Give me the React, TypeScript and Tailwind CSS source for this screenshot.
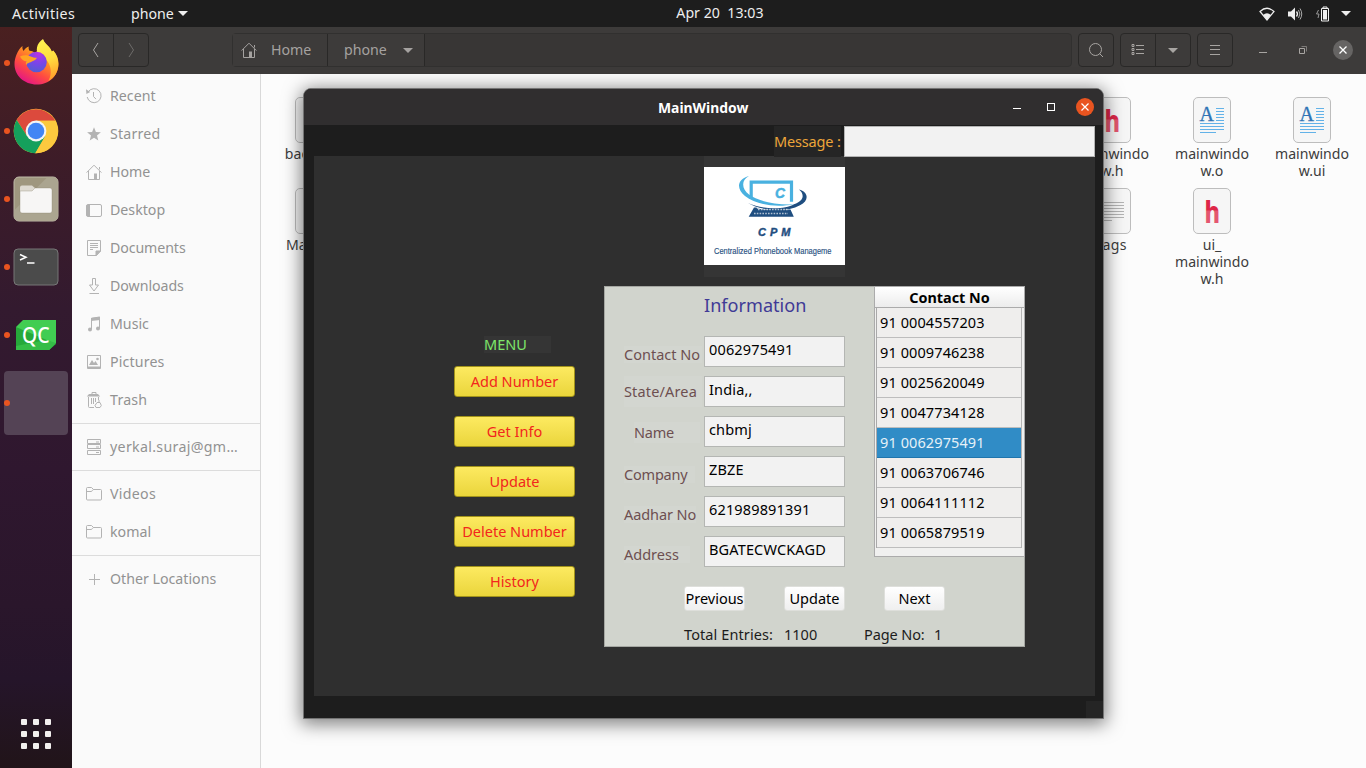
import React from "react";

type Kids = { children?: React.ReactNode };

/* ---------- small icons ---------- */

function Sym({ children, size = 16 }: Kids & { size?: number }) {
  return (
    <svg width={size} height={size} viewBox="0 0 16 16" fill="none" stroke="currentColor" strokeWidth="1" className="shrink-0">
      {children}
    </svg>
  );
}

const HomeShape = (
  <>
    <path d="M.6 8.6 8 1.2l7.4 7.4M2.5 7v8.5h11V7M13.5 3v2.5" />
    <path d="M8 9.5h3V15H8z" fill="currentColor" stroke="none" />
  </>
);
const FolderShape = (
  <path d="M.5 6V2.5a1 1 0 0 1 1-1h4l2 2h7a1 1 0 0 1 1 1v8.5a1 1 0 0 1-1 1h-13a1 1 0 0 1-1-1V6zM.5 5.5h4.6c1.2 0 1.4-2 2.6-2" />
);

const shapes: Record<string, React.ReactNode> = {
  recent: (
    <>
      <path d="M2 4.2A7 7 0 1 1 1.2 9M7.5 4v4.5l2.5 2.6" />
      <path d="M0 1.2 4.2 4 .4 6z" fill="currentColor" stroke="none" />
    </>
  ),
  star: <path d="m8 1.3 1.9 4.7 5 .3-3.9 3.2 1.3 4.9L8 11.7l-4.3 2.7L5 9.5 1.1 6.3l5-.3z" fill="currentColor" stroke="none" />,
  home: HomeShape,
  desktop: (
    <>
      <rect x=".5" y="2.5" width="15" height="12" rx="1.5" />
      <path d="M.5 3H4v11H.5z" fill="currentColor" stroke="none" />
    </>
  ),
  documents: (
    <>
      <path d="M1.5.5h13V11l-4 4.5h-9zM4 3.5h8M4 5.5h8M4 7.5h8M4 9.5h3" />
      <path d="M10 15.5V11h4.5z" fill="currentColor" />
    </>
  ),
  downloads: <path d="M6.5.5h3V7h3L8 13 3.500 7h3zM3.500 15.500h9.500" />,
  music: (
    <>
      <path d="M5.5 13V2.300l8-1.300v11.300" />
      <path d="M5 2 14 .7V4L5 5z" fill="currentColor" stroke="none" />
      <circle cx="4" cy="13.5" r="2" fill="currentColor" stroke="none" />
      <circle cx="12" cy="12.5" r="2" fill="currentColor" stroke="none" />
    </>
  ),
  pictures: (
    <>
      <path d="M1.5 1.5h13v13h-13z" />
      <path d="M2 12.5h12v2H2zM3 11l3-5 2 3 1.5-2 2.5 4z" fill="currentColor" stroke="none" />
      <circle cx="11.5" cy="5" r="1.3" fill="currentColor" stroke="none" />
    </>
  ),
  trash: (
    <>
      <path d="M2.5 5v9.5a1 1 0 0 0 1 1H8M12.5 5v3M5.5 6v6M7.5 6v6M9.5 6v4M6 2V.5h4V2" />
      <path d="M.8 4.5 3 2h9l2.2 2.5z" fill="currentColor" stroke="none" />
      <path d="M11 10.5h3l1.300 3-1.300 2h-4l-1-2zM13 8v2" />
    </>
  ),
  server: <path d="M1.5.5h13v4h-13zM1.5 5.5h13v4h-13zM1.5 11.5h13v4h-13zM10 3h3M10 8h3M10 13.5h3" />,
  folder: FolderShape,
  plus: <path d="M8.5 3v11M3 8.5h11" />,
};

/* ---------- dock ---------- */

function Firefox() {
  return (
    <svg width="46" height="48" viewBox="0 0 46 48" className="-mt-[2px] ml-px">
      <defs>
        <linearGradient id="ffa" x1=".85" y1=".1" x2=".3" y2="1">
          <stop offset="0" stopColor="#fff44f" />
          <stop offset=".35" stopColor="#ff9a1f" />
          <stop offset=".68" stopColor="#ff4a42" />
          <stop offset="1" stopColor="#e31587" />
        </linearGradient>
        <radialGradient id="ffb" cx=".6" cy=".1" r=".95">
          <stop offset="0" stopColor="#b833e1" />
          <stop offset=".5" stopColor="#7a45e8" />
          <stop offset="1" stopColor="#4f5fd0" />
        </radialGradient>
        <linearGradient id="ffc" x1=".4" y1="0" x2=".6" y2="1">
          <stop offset="0" stopColor="#fff34f" />
          <stop offset=".5" stopColor="#ffdc3f" />
          <stop offset="1" stopColor="#ff9a2a" />
        </linearGradient>
      </defs>
      <path d="M8.5 8c-.4 2.300.2 3.800 1.200 5 1-2 2.800-3.700 5-4.500-.3 2 .2 3.400.8 4.300 2.400.1 4.600 1.200 6 2.700L29 2c1.500 3.300 3.700 4.700 5.500 6.500 1.500 1.500 2.600 3.400 3 5l1.800-1c3.500 4 5.200 8.300 5.200 13.200C44.500 37.700 35 46.500 22.700 46.500S.5 37.700.5 26C.5 20 3.700 11.700 8.500 8z" fill="url(#ffa)" />
      <path d="M29 1c1.300 3.500 4 5.800 6 8 2 2.200 2.600 3.700 3 5.500l1.300-1.800c3 3.800 5 8 5 13.300 0 8-4 14-10 17 3-5 3.500-11.500.5-17.500-2.500-5-5.500-7.500-9.500-9.500-2.500-1-2.800-3-2.300-6.500C23.500 6 26 3 29 1z" fill="url(#ffc)" />
      <circle cx="22.500" cy="24" r="10.300" fill="url(#ffb)" />
      <path d="M6 18.500c3.500-1.800 8-1.800 11.500.3 1.800.9 3.500 1.200 5.300 1-.5 2.500-3.800 3-5.300 4-2.500 1.500-4.500 1-5.300 3.500-.5-1.500-.3-3 .3-4-2.500.1-5-1.700-6.500-4.800z" fill="#ffa423" />
    </svg>
  );
}

function Chrome() {
  return (
    <svg width="46" height="46" viewBox="0 0 46 46">
      <circle cx="23" cy="23" r="22.3" fill="#fcc934" />
      <path d="M3.700 12A22.300 22.300 0 0 1 42.300 12.700L23 12.700 14 28z" fill="#dc4a3d" />
      <path d="M3.700 12A22.300 22.300 0 0 0 22.300 45.300L32 28.500 14 28z" fill="#15a05c" />
      <path d="M42.300 12.700H23l9 16L22.300 45.300A22.300 22.300 0 0 0 42.300 12.700z" fill="#fcc93f" />
      <circle cx="23" cy="23" r="10.4" fill="#f4f4f4" />
      <circle cx="23" cy="23" r="8.3" fill="#4285f4" />
    </svg>
  );
}

function FilesApp() {
  return (
    <svg width="46" height="46" viewBox="0 0 46 46">
      <rect x="1" y="1" width="44" height="44" rx="5" fill="#9f977f" stroke="#c0bba9" />
      <path d="M1.500 34 34 1.500h6a4.500 4.500 0 0 1 4.500 4.500v34a4.500 4.500 0 0 1-4.500 4.500H6A4.500 4.500 0 0 1 1.500 40z" fill="#aba590" />
      <path d="M7 11.500a2 2 0 0 1 2-2h10l3.500 3V18H7z" fill="#dedad1" />
      <path d="M7 15h12l3-3h15a2 2 0 0 1 2 2v21a2 2 0 0 1-2 2H9a2 2 0 0 1-2-2z" fill="#f7f6f5" stroke="#8b846f" strokeOpacity=".35" />
    </svg>
  );
}

function Terminal() {
  return (
    <svg width="46" height="38" viewBox="0 0 46 38">
      <rect x="1" y="1" width="44" height="36" rx="4" fill="#4b4b4b" stroke="#777" />
      <path d="m7 6.500 6 2.800L7 12M14 15h7.500" fill="none" stroke="#fff" strokeWidth="1.500" />
    </svg>
  );
}

function QtCreator() {
  return (
    <svg width="40" height="30" viewBox="0 0 40 30">
      <path d="M7 0h33v23l-7 7H0V7z" fill="#41cd52" />
      <path d="M0 7 40 24l-7 6H0z" fill="#26a93a" />
      <path d="M0 26 30 20l10 3-7 7H0z" fill="#35bd47" />
      <text x="6" y="23" textLength="27.500" lengthAdjust="spacingAndGlyphs" fill="#fff" fontFamily="Noto Sans, sans-serif" fontWeight="500" fontSize="22">QC</text>
    </svg>
  );
}

function DockItem({ children, active }: Kids & { active?: boolean }) {
  return (
    <div className={active ? "relative flex h-16 w-16 items-center justify-center rounded bg-[#544355]" : "relative flex h-16 w-16 items-center justify-center"}>
      <span className="absolute left-0 top-[29px] h-[6px] w-[6px] rounded-full bg-[#e95420]" />
      {children}
    </div>
  );
}

function Dock() {
  return (
    <div className="flex w-[72px] shrink-0 flex-col items-center justify-between bg-[linear-gradient(180deg,#4a2020_0%,#3d1c28_18%,#331a2f_38%,#2f172f_60%,#2a162b_78%,#25152a_88%,#211419_100%)] pb-[19px] pt-1">
      <div className="flex flex-col gap-1">
        <DockItem><Firefox /></DockItem>
        <DockItem><Chrome /></DockItem>
        <DockItem><FilesApp /></DockItem>
        <DockItem><Terminal /></DockItem>
        <DockItem><QtCreator /></DockItem>
        <DockItem active />
      </div>
      <div className="grid grid-cols-3 gap-[6px]">
        {Array.from({ length: 9 }, (_, i) => <span key={i} className="h-[6px] w-[6px] rounded-[1px] bg-[#f2efee]" />)}
      </div>
    </div>
  );
}

/* ---------- top bar ---------- */

function Caret() {
  return (
    <svg width="10" height="5" viewBox="0 0 10 5"><path d="M0 0h10L5 5z" fill="currentColor" /></svg>
  );
}

function TopBar() {
  return (
    <div className="grid h-[27px] shrink-0 grid-cols-3 items-center bg-[#1d1d1d] text-[14.2px] text-[#eeeeee]">
      <div className="flex items-center pl-3">
        <span className="w-[119px] tracking-[0.4px]">Activities</span>
        <span className="w-[47px]">phone</span>
        <Caret />
      </div>
      <div className="-mt-px whitespace-pre pl-[221px]">Apr 20  13:03</div>
      <div className="flex items-center justify-end pr-[15px]">
        <svg width="16" height="14" viewBox="0 0 16 14" className="mr-3">
          <path d="M1 4.500Q8-2 15 4.500L8 13z" fill="none" stroke="#eee" strokeWidth="1.200" />
          <path d="M4 8Q8 4.500 12 8L8 13z" fill="#eee" />
        </svg>
        <svg width="16" height="14" viewBox="0 0 16 14" className="mr-3">
          <path d="M1 4.500h3L8 .5v13L4 9.500H1z" fill="#eee" />
          <path d="M9.500 4.500q2 2.500 0 5" fill="none" stroke="#eee" strokeWidth="1.300" />
          <path d="M11.500 3q2.800 4 0 8M13 1.500q3.500 5.500 0 11" fill="none" stroke="#aaa" />
        </svg>
        <svg width="16" height="16" viewBox="0 0 16 16" className="mr-[10px]">
          <path d="M3.500 4 1.500 8h2.500L3 12" fill="none" stroke="#999" />
          <path d="M6.500 2.500h7v12.500h-7zM8 1h4v1.500H8z" fill="none" stroke="#eee" />
          <path d="M8 4h4v9.500H8z" fill="#eee" />
        </svg>
        <Caret />
      </div>
    </div>
  );
}

/* ---------- file manager ---------- */

function Box({ children, className }: Kids & { className: string }) {
  return <div className={"flex h-[34px] items-center rounded-[4px] border border-[#292827] text-[#a8a5a2] " + className}>{children}</div>;
}

function HeaderBar() {
  return (
    <div className="flex h-[47px] shrink-0 items-center bg-[#3d3b3a] px-[6px] pb-px text-[14.2px]">
      <Box className="w-[71px]">
        <span className="flex h-full w-[35px] items-center justify-center border-r border-[#292827]">
          <svg width="8" height="16" viewBox="0 0 8 16" fill="none" stroke="currentColor"><path d="M6 1 1.500 8 6 15" /></svg>
        </span>
        <span className="flex flex-1 items-center justify-center text-[#6e6c6a]">
          <svg width="8" height="16" viewBox="0 0 8 16" fill="none" stroke="currentColor"><path d="M2 1 6.500 8 2 15" /></svg>
        </span>
      </Box>
      <div className="ml-[83px] flex h-[34px] w-[840px] items-center rounded-[4px] border border-[#31302f] bg-[#383635] text-[#a5a2a0]">
        <div className="flex h-full w-[95px] items-center border-r border-[#292827] bg-[#3d3b3a] pl-2">
          <Sym>{HomeShape}</Sym>
          <span className="ml-[14px]">Home</span>
        </div>
        <div className="flex h-full w-[97px] items-center border-r border-[#292827] bg-[#3d3b3a] pl-4">
          <span className="w-[59px]">phone</span>
          <Caret />
        </div>
      </div>
      <Box className="ml-[6px] w-[36px] justify-center">
        <Sym><circle cx="7.5" cy="7.5" r="6" /><path d="m11.500 11.500 3.500 3.500" /></Sym>
      </Box>
      <Box className="ml-[6px] w-[71px]">
        <span className="flex h-full w-[35px] items-center justify-center border-r border-[#292827]">
          <svg width="14" height="12" viewBox="0 0 14 12" fill="none" stroke="currentColor"><path d="M1 .5h2v2H1zM1 4.500h2v2H1zM1 8.500h2v2H1zM5 1.500h8M5 5.500h8M5 9.500h8" /></svg>
        </span>
        <span className="flex flex-1 justify-center"><Caret /></span>
      </Box>
      <Box className="ml-[6px] w-[36px] justify-center">
        <svg width="10" height="10" viewBox="0 0 10 10" stroke="currentColor"><path d="M0 .5h10M0 4.500h10M0 9.500h10" /></svg>
      </Box>
      <div className="ml-[26px] flex items-center text-[#a8a5a2]">
        <span className="mt-1 h-px w-2 bg-[#a8a5a2]" />
        <svg width="8" height="8" viewBox="0 0 8 8" fill="none" stroke="currentColor" className="ml-8"><path d="M.5 2.500h5v5h-5z" /><path d="M2.500.5h5v5" strokeOpacity=".6" /></svg>
        <span className="ml-[26px] flex h-5 w-5 items-center justify-center rounded-full bg-[#666463]">
          <svg width="8" height="8" viewBox="0 0 8 8" stroke="#fff" strokeWidth="1.300"><path d="m.5.5 7 7M7.500.5l-7 7" /></svg>
        </span>
      </div>
    </div>
  );
}

function Place({ icon, label, track }: { icon: string; label: string; track?: string }) {
  return (
    <div className="flex h-[38px] items-center pl-[14px]">
      <span className="text-[#b3b3b3]"><Sym>{shapes[icon]}</Sym></span>
      <span className={"ml-2 " + (track ?? "")}>{label}</span>
    </div>
  );
}

function Sidebar() {
  const rule = <div className="my-1 h-px bg-[#dcdcdc]" />;
  return (
    <div className="w-[189px] shrink-0 border-r border-[#d9d9d9] bg-[#fafafa] pt-[3px] text-[14.2px] text-[#929292]">
      <Place icon="recent" label="Recent" />
      <Place icon="star" label="Starred" track="tracking-[0.2px]" />
      <Place icon="home" label="Home" />
      <Place icon="desktop" label="Desktop" />
      <Place icon="documents" label="Documents" track="tracking-[-0.1px]" />
      <Place icon="downloads" label="Downloads" track="tracking-[-0.05px]" />
      <Place icon="music" label="Music" />
      <Place icon="pictures" label="Pictures" track="tracking-[0.15px]" />
      <Place icon="trash" label="Trash" track="tracking-[0.2px]" />
      {rule}
      <Place icon="server" label="yerkal.suraj@gm…" track="tracking-[0.32px]" />
      {rule}
      <Place icon="folder" label="Videos" track="tracking-[0.3px]" />
      <Place icon="folder" label="komal" />
      {rule}
      <Place icon="plus" label="Other Locations" />
    </div>
  );
}

function FileCell({ kind, lines, track }: { kind: string; lines: string[]; track?: string }) {
  return (
    <div className="flex w-[100px] flex-col items-center">
      <svg width="38" height="46" viewBox="0 0 38 46">
        <defs>
          <linearGradient id="hfill" gradientUnits="userSpaceOnUse" x1="0" y1="22" x2="0" y2="23">
            <stop offset="0" stopColor="#de2648" />
            <stop offset="1" stopColor="#e4566f" />
          </linearGradient>
        </defs>
        <rect x=".5" y=".5" width="37" height="45" rx="4.500" fill="#f6f6f6" stroke="#bdbdbd" />
        {kind === "h" && (
          <text x="11.500" y="35" fontFamily="Noto Sans, sans-serif" fontWeight="800" fontSize="30.500" textLength="15.500" lengthAdjust="spacingAndGlyphs" fill="url(#hfill)">h</text>
        )}
        {kind === "doc" && (
          <>
            <text x="6.500" y="24" fontFamily="Liberation Serif, serif" fontSize="20" fill="#2f74b5" stroke="#2f74b5" strokeWidth=".3">A</text>
            <path d="M23 11.500h8M23 14.500h8M23 17.500h8M23 20.500h8M23 23.500h8M7 26.500h24M7 29.500h24M7 32.500h24M7 35.500h16" stroke="#62b2e8" />
          </>
        )}
        {kind === "text" && <path d="M7 14.500h24M7 17.500h24M7 20.500h24M7 23.500h24M7 26.500h24M7 29.500h24M7 32.500h12" stroke="#b4b4b4" />}
      </svg>
      <div className={"mt-[2px] flex flex-col items-center text-[14.1px] leading-[17px] " + (track ?? "")}>
        {lines.map((l) => <span key={l}>{l}</span>)}
      </div>
    </div>
  );
}

function FileArea() {
  return (
    <div className="flex flex-1 justify-between bg-[#fcfcfc] pl-[3px] pt-[23px] text-[#3d3d3d]">
      <div className="grid grid-rows-[91px_100px] content-start">
        <FileCell kind="blank" lines={["backup_.", "co"]} />
        <FileCell kind="blank" lines={["Makefile"]} />
      </div>
      <div className="grid grid-cols-[100px_100px_100px] grid-rows-[91px_100px] content-start pr-1">
        <FileCell kind="h" lines={["mainwindo", "w.h"]} />
        <FileCell kind="doc" lines={["mainwindo", "w.o"]} />
        <FileCell kind="doc" lines={["mainwindo", "w.ui"]} />
        <FileCell kind="text" lines={["tags"]} track="tracking-[0.3px]" />
        <FileCell kind="h" lines={["ui_", "mainwindo", "w.h"]} />
      </div>
    </div>
  );
}

/* ---------- phonebook window ---------- */

function Logo() {
  return (
    <svg width="141" height="98" viewBox="0 0 141 98" className="bg-white">
      <path d="M47.200 32V15.200h40.300v19.500" fill="none" stroke="#49b1e0" strokeWidth="3.200" />
      <path d="M45 9C33 12 32 22 41 29c11 8.500 30 12 49 8.300C70 38 54 34 45 27.500 37.500 22 37 13 45 9z" fill="#49b1e0" />
      <path d="M44 36c14 6.500 36 7 46 1.300C100.500 33.500 100.500 27 95 22.500c9.500 2.500 10.500 11 1 15.800C82 46 57 44 44 36z" fill="#1f4e80" />
      <path d="M50 40.500h2.500l.5 1 8 1h25.500l3.300 7.200H44.700z" fill="#1f4e80" />
      <path d="M54 42.500h31M50 46.500h34" stroke="#fff" strokeOpacity=".65" strokeDasharray="1.600 1.200" strokeWidth="1.300" />
      <text x="71" y="31" fill="#49b1e0" fontFamily="Liberation Sans, sans-serif" fontSize="15" fontWeight="bold" fontStyle="italic" stroke="#49b1e0" strokeWidth=".5" textLength="10" lengthAdjust="spacingAndGlyphs">C</text>
      <text x="54" y="69" fill="#1f4e80" stroke="#1f4e80" strokeWidth=".4" fontFamily="Liberation Sans Narrow, Liberation Sans, sans-serif" fontSize="11" fontWeight="bold" fontStyle="italic" letterSpacing="4">CPM</text>
      <text x="10" y="86.500" fill="#1f4e80" stroke="#1f4e80" strokeWidth=".15" fontFamily="Liberation Sans Narrow, Liberation Sans, sans-serif" fontSize="9.800" textLength="117.500" lengthAdjust="spacingAndGlyphs">Centralized Phonebook Manageme</text>
    </svg>
  );
}

function MenuButton({ children }: Kids) {
  return (
    <button className="flex h-[31px] w-[121px] items-center justify-center rounded-[3px] border border-[#a2931a] bg-linear-to-b from-[#fdea60] to-[#ead53a] text-[#f2261c]">
      {children}
    </button>
  );
}

function PushButton({ children }: Kids) {
  return (
    <button className="flex h-[25px] w-[61px] items-center justify-center whitespace-nowrap rounded-[3px] border border-[#dedfdb] bg-linear-to-b from-white to-[#efefef]">
      {children}
    </button>
  );
}

const fields = [
  { label: "Contact No", value: "0062975491", box: "mt-[10px] h-[17px] w-[78px]" },
  { label: "State/Area", value: "India,,", box: "h-[31px] w-[78px] tracking-[0.15px]" },
  { label: "Name", value: "chbmj", box: "ml-[10px] mt-[6px] h-[21px] w-[66px] tracking-[-0.2px]" },
  { label: "Company", value: "ZBZE", box: "mt-[10px] h-[17px] w-[71px] tracking-[-0.2px]" },
  { label: "Aadhar No", value: "621989891391", box: "mt-[10px] h-[17px] w-[72px] tracking-[-0.1px]" },
  { label: "Address", value: "BGATECWCKAGD", box: "mt-[10px] h-[17px] w-[66px]" },
];

const numbers = ["0004557203", "0009746238", "0025620049", "0047734128", "0062975491", "0063706746", "0064111112", "0065879519"];

function ContactTable() {
  return (
    <div className="flex h-[271px] w-[151px] shrink-0 flex-col border border-[#ababab] bg-[#f0f0ef]">
      <div className="flex h-[21px] items-center justify-center border-b border-[#ababab] bg-linear-to-b from-white to-[#ececec] pt-[2px] text-[14.4px] font-bold leading-[18px]">
        Contact No
      </div>
      <div className="mr-[2px] border-r border-[#b5b5b5]">
        <div className="ml-px border-l border-[#a9a9a9]">
          {numbers.map((n) => (
            <div
              key={n}
              className={
                n === "0062975491"
                  ? "flex h-[30px] items-center border-b border-[#1f75ad] bg-[#308cc6] pl-[3px] tracking-[0.1px] text-[#e6f1f8]"
                  : "flex h-[30px] items-center border-b border-[#bdbdbd] bg-[#efeeed] pl-[3px] tracking-[0.1px]"
              }
            >
              91 {n}
            </div>
          ))}
        </div>
      </div>
    </div>
  );
}

function InfoPanel() {
  return (
    <div className="h-[361px] w-[421px] border border-[#a5a7a2] bg-[#d1d4cd] text-black">
      <div className="-mr-px -mt-px flex justify-between">
        <div className="pl-[19px]">
          <div className="ml-20 mt-[9px] h-[21px] text-[18.1px] leading-[21px] text-[#403a96]">Information</div>
          <div className="mt-5 flex flex-col gap-[9px]">
            {fields.map((f) => (
              <div key={f.label} className="flex h-[31px]">
                <div className="w-20 shrink-0">
                  <div className={"flex items-center whitespace-nowrap bg-[#d3d6d0] text-[#6d4f50] " + f.box}>{f.label}</div>
                </div>
                <div className="h-[31px] w-[141px] border border-[#b4b6b3] bg-[#f2f2f2] pl-1 leading-[25px] tracking-[0.15px]">{f.value}</div>
              </div>
            ))}
          </div>
        </div>
        <ContactTable />
      </div>
      <div className="ml-[79px] mt-[19px] flex gap-[39px]">
        <PushButton>Previous</PushButton>
        <PushButton>Update</PushButton>
        <PushButton>Next</PushButton>
      </div>
      <div className="ml-[79px] mt-[15px] flex h-[17px] items-center text-[#1c1c1c]">
        <span className="w-[100px] tracking-[0.1px]">Total Entries:</span>
        <span className="w-20">1100</span>
        <span className="w-[70px] tracking-[-0.1px]">Page No:</span>
        <span>1</span>
      </div>
    </div>
  );
}

function MainWindow() {
  return (
    <div className="absolute left-[303px] top-[88px] flex h-[631px] w-[801px] flex-col overflow-hidden rounded-t-[8px] border border-[#747474] bg-[#1d1d1d] text-[14.5px] shadow-[0_3px_18px_2px_rgba(0,0,0,0.5)]">
      <div className="flex h-[36px] shrink-0 items-center bg-[#302e2f] pl-[354px] pr-[9px] text-white">
        <span className="mt-[2px] flex-1 text-[13.9px] font-bold">MainWindow</span>
        <span className="mt-[3px] h-px w-2 bg-white" />
        <span className="ml-[26px] h-2 w-2 border border-white" />
        <span className="ml-[21px] flex h-[18px] w-[18px] items-center justify-center rounded-full bg-[#e95420]">
          <svg width="8" height="8" viewBox="0 0 8 8" stroke="#fff" strokeWidth="1.200"><path d="m.5.5 7 7M7.500.5l-7 7" /></svg>
        </span>
      </div>
      <div className="relative z-10 flex h-[31px] shrink-0 justify-end pr-2 pt-px">
        <div className="flex h-[31px] w-[67px] items-center whitespace-nowrap bg-[#252525] tracking-[-0.15px] text-[#eda63a]">Message :</div>
        <div className="ml-[3px] h-[31px] w-[251px] border border-[#b4b4b4] bg-[#f2f2f2]" />
      </div>
      <div className="ml-[10px] mr-2 flex h-[540px] shrink-0 bg-[#2f2f2f] pl-[140px]">
        <div className="flex flex-col pt-[180px]">
          <div className="ml-[30px] flex h-[17px] w-[67px] items-center bg-[#353535] text-[#7ee66a]">MENU</div>
          <div className="mt-[13px] flex flex-col gap-[19px]">
            <MenuButton>Add Number</MenuButton>
            <MenuButton>Get Info</MenuButton>
            <MenuButton>Update</MenuButton>
            <MenuButton>Delete Number</MenuButton>
            <MenuButton>History</MenuButton>
          </div>
        </div>
        <div className="ml-[29px]">
          <div className="mb-[9px] ml-[100px] h-[121px] w-[141px] bg-[#353535] pt-[11px]"><Logo /></div>
          <InfoPanel />
        </div>
      </div>
      <div className="flex flex-1 items-end justify-end">
        <span className="h-[17px] w-[17px] bg-[#252525]" />
      </div>
    </div>
  );
}

export default function App() {
  return (
    <div className="relative flex h-[768px] w-[1366px] flex-col overflow-hidden bg-[#1d1d1d] font-['Noto_Sans',sans-serif]">
      <TopBar />
      <div className="flex min-h-0 flex-1">
        <Dock />
        <div className="flex min-w-0 flex-1 flex-col">
          <HeaderBar />
          <div className="flex min-h-0 flex-1">
            <Sidebar />
            <FileArea />
          </div>
        </div>
      </div>
      <MainWindow />
    </div>
  );
}
